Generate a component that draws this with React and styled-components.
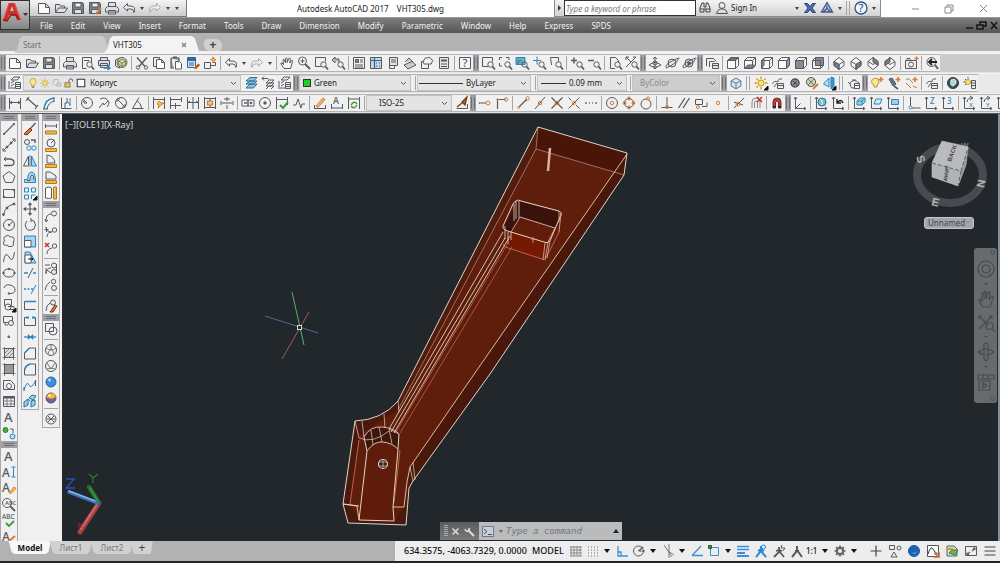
import React from 'react';
import styled, { createGlobalStyle, css } from 'styled-components';

const GlobalStyle = createGlobalStyle`
  * { box-sizing: border-box; }
  html, body, #root { height: 100%; }
  body {
    margin: 0;
    overflow: hidden;
    background: #b2b2b2;
    font: 8px/12px "Noto Sans", "Open Sans", sans-serif;
    color: #222;
  }
  button, input, select { font: inherit; color: inherit; margin: 0; padding: 0; border: 0; background: none; }
`;

/* ---------- glyph library: [path, stroke, fill, width] on a 16 unit grid ---------- */
const K = '#555a62';
const B = '#2a86bd';
const O = '#dc7a32';
const R = '#c8322e';
const G = '#3f9a35';
const N = 'none';
const LB = '#a9d4ea';
const Y = '#f2c84b';

const c = (x, y, r) => `M${x - r} ${y}a${r} ${r} 0 1 0 ${2 * r} 0a${r} ${r} 0 1 0 ${-2 * r} 0`;
const box = (x, y, w, h) => `M${x} ${y}h${w}v${h}h${-w}z`;
const T = (t, x, y, s, fill = K) => ({ t, x, y, s, fill });
const LENS = [[c(10.5, 9.5, 2.7)], ['M12.5 11.5l2.5 3', K, N, 1.8]];
const AXES = [['M3.5 2.5v11h10M2 4l1.5-2L5 4M12 12l2 1.5L12 15']];

const glyphs = {
  fresh: [['M2.5 3.5h7l4 4v6h-11zM9.5 3.5v4h4', K, '#fafafa']],
  open: [['M2.5 12.5v-8h4l1 1.5h4v2M2.5 12.5l3-4.500h9l-3 4.500z', K, '#dde0e4']],
  save: [['M2.5 2.5h10l1 1v10h-11z', K, '#7d838b'], [box(5, 3, 6, 4), K, '#eee'], [box(4.5, 9.5, 7, 4), K, '#dfe3e8']],
  saveAs: [['M2.5 2.5h10l1 1v10h-11z', K, '#7d838b'], [box(5, 3, 6, 4), K, '#eee'], [box(4.5, 9.5, 7, 4), K, '#dfe3e8'], ['M9 14l5-6', O, N, 2]],
  print: [['M4.5 6.500v-4h7v4M3.500 6.500h9l2 2v3.500h-13V8.500zM4.500 10.500h7v3.500h-7z', K, '#dcdfe3']],
  preview: [['M12.500 7V2.500h-9v11h4M5 5.500h5'], ...LENS],
  publish: [['M4.500 5.500v-3h7v3M3 5.500h10.500v5H2.500v-5zM4.500 8.500h7v4h-7z', K, '#dcdfe3'], ['M8 13h5.500M11.500 11l2.500 2-2.500 2', B, N, 1.500]],
  print3d: [['M2.500 5l4-2v10l-4-2z', K, '#e8eaec'], [c(9, 7.500, 5), K, '#dfe6c9'], ['M9 4l3.500 2v3.500L9 11.500 5.500 9.500V6zM5.500 6L9 8l3.500-2M9 8v3.500', '#6d6a3c', '#d9d17a', 0.8]],
  cut: [['M3 2.500l8 9M13 2.500l-8 9', K, N, 1.400], [c(4, 12.5, 1.700)], [c(12, 12.5, 1.700)]],
  copy: [['M2.500 2.500h6v2M2.500 2.500v9h3'], ['M5.500 4.500h5l3 3v6h-8zM10.500 4.500v3h3', K, '#fff']],
  paste: [['M3 3h8v3M3 3v10h3M5 2h4', K, '#a8aab0', 1.200], ['M7.500 6.500h4l2 2v5.500h-6z', K, '#fff']],
  match: [[box(2.5, 2.5, 8, 10), '#35608f', '#d4e2ef'], ['M3 4.500h7', '#2b6ba5', N, 3], ['M4 8h5M4 10h5', '#35608f'], ['M9 13l4-4 2 1-4 4z', O, '#a85c22']],
  block: [['M2.500 7.500h6v6h-6zM8.500 10.500h5v-3h-3M11 2.500v3'], ['M11 2l1 2 2 .5-2 1-.5 2-1-2-2-1 2-.5z', O, Y]],
  undo: [['M6.500 3.500L2.500 7.500l4 3.500V9h3.500q2.500 0 3 3.500q2-6-3-6.500H6.500z', K, '#eceef1']],
  redo: [['M9.500 3.500L13.500 7.500l-4 3.500V9H6q-2.500 0-3 3.500q-2-6 3-6.500h3.500z', '#a9adb3', '#eceef1']],
  hand: [['M5 13.500L2 9q-.5-1.500 1-1l1.500 1.500L4 5q.5-1.500 1.500 0L6.500 8 6.500 3.500q1-1.500 1.700 0V7.500L9.700 3.500q1-1 1.600 0L10.800 8 12.500 5.500q1.500-.5 1 1L11.500 13.500z', K, '#f5f5f5']],
  zoomRt: [[c(6.5, 6, 4)], ['M9 9l5 5', K, N, 1.800], ['M6.500 4v4M4.500 6h4']],
  zoomWin: [['M8 11.500H2.500v-9h10v4'], ...LENS],
  zoomPrev: [['M2 5l3-3v2h4v3M2 5l3 3V6', K, '#b9bcc1'], ...LENS],
  zoomDyn: [['M2.500 5V2.500H5M9 2.500h3V5M2.500 8v3H5'], ...LENS],
  zoomScale: [[box(2, 2.5, 9, 7), B, '#5fb0c9'], ['M4 9V6h3'], ...LENS],
  zoomCtr: [['M6 1.500v8M2 5.500h8', B], ...LENS],
  zoomObj: [['M3.500 10L2.500 2.500h8v4'], ...LENS],
  zoomIn: [['M2 5.500h6M5 2.500v6', K, N, 1.500], ...LENS],
  zoomOut: [['M2 5.500h6', K, N, 1.500], ...LENS],
  zoomAll: [['M8 13.500H3.500v-11h5l3 3v2'], ...LENS],
  zoomExt: [['M2 2l5 5M12 2L7 7 2 12M2 5V2h3M9 2h3'], ...LENS],
  props: [[box(2.5, 2.5, 11, 11)], [box(4.5, 4.5, 3, 3), K, '#888'], ['M9 5h3M9 7h3M4 10h8M4 12h8']],
  design: [[box(2.5, 2.5, 11, 11), K, '#c7d5e5'], ['M6.500 3v10M3 5.500h10M8 8h1M11 8h1M8 11h1M11 11h1', '#35608f', N, 1.200]],
  palette: [[box(4.5, 2.5, 8, 8), K, '#e2e2e2'], ['M4.500 2.500v11h5v-3M6 5h5M6 7h5']],
  sheets: [['M2 10l8-3.500 4 3.500-8 4zM3 7l4-4 4 4', K, '#c9ccd1']],
  markup: [[box(2.5, 6.5, 7, 7)], ['M5 5q1-3 3-2q3-2 4 1q3 1 1 3q0 3-3 2H5q-2-2 0-4z', K, '#f3f3f3']],
  calc: [[box(3.5, 2.5, 9, 11), K, '#e4e7ea'], ['M5 5.500h6', K, N, 2], ['M5 9h6M5 11.500h6', K, N, 1]],
  help: [[box(2.5, 2.5, 11, 11), K, '#f5f5f5'], T('?', 5.5, 12, 11)],
  orbit: [[c(8, 8, 2)], ['M8 2v12M2 10q6-5 12 0q-6 4-12 0zM6 4l2-2 2 2M6 12l2 2 2-2']],
  orbit2: [[c(8, 8, 4), K, '#e5e7ea'], ['M2.500 13Q0 10 9 5.500T14 4.500q0 2-6 5.500t-5.500 3']],
  orbit3: [[c(8, 8, 4), K, '#d8dbdf'], ['M2.500 13Q0 10 9 5.500T14 4.500q0 2-6 5.500t-5.500 3'], ['M7 7l3 1-3 2z', K, K]],
  views: [['M2.500 11V3.500h7l3 3M5.500 12V6.500h5'], [box(8.5, 8.5, 6, 5), K, '#e2e2e2'], ['M9 10.500h5']],
  cubeTop: [['M2.500 5.500h8v8h-8zM2.500 5.500l3-3h8l-3 3M13.500 2.500v8l-3 3', K, '#fafafa'], ['M3 5l2.500-2h7L10 5z', K, '#878c94']],
  cubeBottom: [['M2.500 5.500h8v8h-8zM2.500 5.500l3-3h8l-3 3M13.500 2.500v8l-3 3', K, '#fafafa'], ['M3 13l2.500-3h7L10 13z', K, '#878c94']],
  cubeLeft: [['M2.500 5.500h8v8h-8zM2.500 5.500l3-3h8l-3 3M13.500 2.500v8l-3 3', K, '#fafafa'], ['M3 6l2-3v7l-2 3z', K, '#a4a8ae']],
  cubeRight: [['M2.500 5.500h8v8h-8zM2.500 5.500l3-3h8l-3 3M13.500 2.500v8l-3 3', K, '#fafafa'], ['M11 6l2-3v7l-2 3z', K, '#d6d8dc']],
  cubeFront: [['M2.500 5.500h8v8h-8zM2.500 5.500l3-3h8l-3 3M13.500 2.500v8l-3 3', K, '#fafafa'], [box(2.5, 5.5, 8, 8), K, '#878c94']],
  cubeBack: [[box(5.5, 2.5, 8, 8), K, '#878c94'], ['M2.500 5.500h8v8h-8zM2.500 5.500l3-3M10.500 13.500l3-3']],
  isoSW: [['M8 2.500l5 4v4l-5 4-5-4v-4zM3 6.500l5 3 5-3M8 9.500v5', K, '#fafafa'], ['M3 6.500l5 3v5l-5-4z', K, '#777c84']],
  isoSE: [['M8 2.500l5 4v4l-5 4-5-4v-4zM3 6.500l5 3 5-3M8 9.500v5', K, '#fafafa'], ['M13 6.500l-5 3v5l5-4z', K, '#777c84']],
  isoNE: [['M8 2.500l5 4v4l-5 4-5-4v-4zM3 6.500l5 3 5-3', K, '#fafafa'], ['M8 2.500l5 4v4L8 7z', K, '#777c84']],
  isoNW: [['M8 2.500l5 4v4l-5 4-5-4v-4zM3 6.500l5 3 5-3', K, '#fafafa'], ['M8 2.500l-5 4v4L8 7z', K, '#777c84']],
  camera: [[box(2.5, 5.5, 11, 8)], ['M4 5V3.500h3V5'], [c(8, 9.5, 2.500)], ['M11.500 3.500h4M13.500 1.500v4', O, N, 1.500]],
  prevView: [[c(7.5, 7, 4.500), K, '#eee'], ['M11 10l3 4', K, N, 2], ['M5 7h8M8 4L5 7l3 3', '#222', N, 1.800]],

  layers: [['M4 5l3-3h6l-3 3zM4 8l3-2M4 11l3-2M3 13h5M2 6v8'], [box(8.5, 7.5, 5, 6), K, '#eee'], ['M9 9.500h4M9 11.500h4']],
  bulb: [['M8 2q4 0 4 4q0 2-2 4v2H6v-2Q4 8 4 6q0-4 4-4z', '#b8962c', '#f9e88f'], ['M6.500 13.500h3', K, N, 1.500]],
  sun: [[c(8, 8, 3), '#c99b17', '#fbe37c'], ['M8 1.500v2M8 12.500v2M1.500 8h2M12.500 8h2M3.500 3.500l1.500 1.500M11 11l1.500 1.500M3.500 12.500L5 11M11 5l1.500-1.500', '#c99b17']],
  freeze: [['M3 3.500h7M3 3.500v7M5 11h3M10 5v2', '#a5a9ae'], [box(8, 8, 5, 4), '#a5a9ae', '#ddd']],
  lock: [[box(2.5, 7.5, 7, 6), '#8a7230', '#d9c178'], ['M8 7V5q0-2.500 2.500-2.500T13 5v1', K, N, 1.300]],
  swatch: [[box(3, 3, 10, 10), '#333', '#fff', 1.400]],
  layerCur: [['M3 6l4-3.500h7L10.500 6zM3 9l4-3h7l-3.500 3zM3 13l4-4h7l-3.500 4z', '#2f6f98', '#8fc0dc']],
  layerPrev: [['M6 8l3-3h5l-3 3zM6 11l3-3h5l-3 3zM6 14l3-3h5l-3 3M2 3.500h5q2 0 2 1M4 1.500l-2 2 2 2']],
  world: [['M3 6l5-3 5 3v5l-5 3-5-3zM3 6l5 2 5-2M8 8v6', '#5b8098', '#cfe0ea']],
  light: [[c(8, 8, 3), '#c99b17', '#fbe37c'], ['M8 1.500v2.500M8 12v2.500M1.500 8H4M12 8h2.500M3.500 3.500L5 5M11 5l1.500-1.500M3.500 12.500L5 11', '#d49b1a', N, 1.400], ['M15 11v4h-4z', '#111', '#111']],
  matBrowse: [['M2.500 9Q4 5 8 7q0-4 4-3M4 12l3-4'], [box(7.5, 8.5, 6, 5), K, '#eee'], ['M8 10.500h5']],
  material: [[c(8, 8, 4), '#4a4f56', '#8b8f95', 1.500], ['M6 6l4 4M10 6l-4 4', '#44484e']],
  texture: [[c(7, 7, 4.500), K, '#d9d3b6'], ['M4 4l6 6M10 4l-6 6', K, N, 0.8], ['M9 14l5-5', O, N, 2]],
  section: [['M8 3L2.500 9l5.500 3z', B, '#bfe0f2'], ['M10 2v12l3-2V3z', B, '#3a94c9'], ['M15 11v4h-4z', '#111', '#111']],
  render: [['M4 8q4-5 9 0v5H6q-2-1-2-5zM2 7l2 2'], [box(8.5, 8.5, 5, 5), K, '#eee'], ['M9 10.500h4M6 5h4']],
  bulbNew: [['M6 3q4 0 4 4q0 2-2 3v2H5v-2Q2.500 9 2.500 6.500T6 3z', '#b8962c', '#f9e88f'], ['M12 2v5M9.500 4.500h5', O, N, 1.600]],
  spot: [['M3 4l3-1 4 6-3 2z', K, '#6c7178'], ['M8 11l4 3', K, N, 1.600], ['M12 2v5M9.500 4.500h5', O, N, 1.600]],
  distant: [['M3 4h3l4 4M3 8l5 5M10 11l4 2', '#a88c2a'], ['M12 2v5M9.500 4.500h5', O, N, 1.600]],
  globe: [[c(8, 8, 5.5), '#2d3a42', '#36505e'], ['M6 5q4-2 5 1t-3 5q-3 0-2-6', '#dfe9ed', '#bcd0d8']],
  sunProp: [[c(6, 7, 2.500), '#c99b17', '#fbe37c'], ['M6 2v1.500M1.500 7H3M3 4l1 1M3 10l1-1', K], [box(9.5, 5.5, 4, 8), K, '#eee'], ['M10 8h3M10 10.500h3']],

  dimLin: [['M2.500 3v11M13.500 3v11M3 7.500h10M5 6L3 7.500 5 9M11 6l2 1.500L11 9']],
  dimAlign: [['M3 3l10 9M2 6l3-4M11 14l3-4', K, N, 1.200]],
  dimArc: [['M3 14Q4 4 13 3', B, N, 1.500], ['M6 14Q7 8 13 6M2 14h5M13 2v5']],
  dimOrd: [['M3.500 2.500v11h10M7 13V8h2V3', K], ['M9 6l3 4M12 3v8', B]],
  dimRad: [[c(8, 8, 5.5)], ['M8 8L4 4M8 8h-3V5']],
  dimJog: [['M4 4q6-3 9 3q0 3-2 5M3 13l4-5 1 2 4-4']],
  dimDia: [[c(8, 8, 5.5)], ['M4 4l8 8M4 7V4h3M9 12h3V9']],
  dimAng: [['M13.500 13.500H2.500L9 2.500M7 6q4 2 4.500 7']],
  dimQuick: [['M2.500 2v12M13.500 2v12M3 4.500h10'], ['M8 6l2 2h3l-3 2-3 3 1-3-2-1z', O, Y]],
  dimBase: [['M2.500 2v12M7.500 8v6M13.500 2v5M3 4.500h10M3 10.500h10']],
  dimCont: [['M2.500 2v12M8 2v12M13.500 2v12M3 7.500h10M5 6L3 7.500M11 6l2 1.500']],
  dimSpace: [['M2.500 2v12M13.500 2v12M3 3.500h10M3 12.500h10'], [box(5.500, 6, 5, 4), O, '#f3c58a', 1.200], ['M8 4v2M8 10v2', K]],
  dimBreak: [['M3 8h10M8 2v4M8 10v4M5 4h6M2 6v4M14 6v4']],
  tol: [[box(2, 5, 12, 6), K, '#fff'], ['M8 5v6M4 8h3', K, N, 1.500], [c(11, 8, 1), K, K]],
  center: [[c(8, 8, 5.5)], [c(8, 8, 1.2), K, K]],
  inspect: [['M2.500 2v12M13.500 2v8M3 4.500h10'], ['M6 10l3 3 5-6', G, N, 2]],
  jogged: [['M2 10h3l2-6 3 9 1-4h3']],
  dimEdit: [['M2.500 13.500h11M2.500 10v4M13.500 10v4'], ['M4 11l7-8 2 1.500-7 8z', O, '#e8b97c']],
  dimText: [T('A', 4, 9, 9), ['M2.500 13h11M2.500 9v5M13.500 9v5']],
  dimUpd: [['M2.500 2v12M13.500 2v12M3 4h10'], ['M5 10q3-5 6-1M11 10q-3 5-6 1', G, N, 1.400]],
  dimStyle: [['M2.500 13.500h11V9', K], ['M3 12l5-4M13 2L8 7l3 3z', '#6b3a16', '#b36a2c', 1.200]],

  snTrack: [['M2 8h7M2 8h1'], [c(11, 8, 2), O]],
  snFrom: [['M3.500 14V4.500h8', K, N, 1.200], [c(12, 4.5, 1.700), O], [c(3.5, 4.5, .7), O]],
  snEnd: [['M4 12L12 4', K, N, 1.200], [c(12.5, 3.500, 1.800), O], [c(3.500, 12.500, 1), O]],
  snMid: [['M3 14L13 2', K], [c(8, 8, 1.800), O]],
  snInt: [['M2.500 2.500l11 11M13.500 2.500l-11 11', K, N, 1.200], [c(8, 8, 1.800), O]],
  snApp: [['M2.500 2.500l3 3M10 10l3.500 3.500M13.500 2.500l-11 11', K], [c(8, 8, 1.500), O]],
  snExt: [['M2 8h2M6 8h1M9 8h1M12 8h2', '#777', N, 1.400]],
  snCen: [[c(8, 8, 5.500)], [c(8, 8, 1.800), O]],
  snQuad: [[c(8, 8, 4.500)], [c(8, 3.500, 1.500), O], [c(8, 12.500, 1.500), O], [c(3.500, 8, 1.500), O], [c(12.500, 8, 1.500), O]],
  snTan: [[c(8, 9, 5)], [c(10, 3.500, 1.500), O]],
  snPerp: [['M8 2v10M2.500 12.500h11', K], [c(8, 12, 1.500), O]],
  snPar: [['M2.500 13L9 3M7 13l6.500-10', K, N, 1.300]],
  snIns: [[box(2.5, 4.5, 7, 5)], ['M9 11.500h5v-4'], [c(5, 12, 1.500), O]],
  snNode: [[c(8, 8, 1.700), O]],
  snNear: [['M3 13L13 3M3 7l9 3', K], [c(7, 9, 2), O]],
  snNone: [['M4 13V7q0-4 4-4t4 4v6M6.500 13V7q1.500-2 3 0v6', '#888'], ['M9 2l5 5M14 2L9 7', R, N, 1.500]],
  magnet: [['M4 13V7q0-4 4-4t4 4v6H9.500V7Q8 5 6.500 7v6z', '#7b2522', '#b5413c'], ['M4 12h2.500M9.500 12H12', '#222', N, 2]],

  ucs: [...AXES, ['M3.500 13.500l5-5']],
  ucsWorld: [...AXES, [c(9, 7, 4), '#27708f', '#7dbccd'], ['M7 4q4 3 1 6', '#fff']],
  ucsPrev: [...AXES, ['M7 8q4-5 6 0M7 4v4h4', '#222', N, 1.400]],
  ucsFace: [...AXES, ['M6 6l3-3h5v4l-3 3H6zM6 6h5v4M11 6l3-3', B, '#9fcfe5']],
  ucsObj: [...AXES, ['M6 9l2-5h6l-2 5z', B, '#d5ecf6']],
  ucsView: [...AXES, [box(6.5, 4.5, 7, 5), B, '#9fcfe5']],
  ucsOrg: [['M4.500 2v11h10'], [c(4.5, 12.5, 1.500), B, '#fff']],
  ucsZ: [...AXES, T('Z', 7, 9, 8, B)],
  ucs3: [...AXES, T('3', 7, 9, 8, B)],
  ucsX: [...AXES, ['M6 7q1-5 5-4M9 1l3 2-3 2', K], T('X', 8, 12, 6, B)],
  ucsY: [...AXES, ['M6 7q1-5 5-4M9 1l3 2-3 2', K], T('Y', 8, 12, 6, B)],
  ucsAxis: [...AXES, ['M6 7q1-5 5-4M9 1l3 2-3 2', K]],

  line: [['M3 13L13 3', K, N, 1.100], [c(3, 13, .7), K, K], [c(13, 3, .7), K, K]],
  xline: [['M2.500 13.500l11-11'], [c(6, 10, 1), K, K], [c(10, 6, 1), K, K], ['M2 11v3h3M11 2h3v3']],
  pline: [['M3 12.500h6q4 0 4-3t-4-3.500H4', K, N, 1.300], ['M5 4L3 6l2 2']],
  polygon: [['M8 2.500l6 4.500-2.300 6.500H4.300L2 7z']],
  rect: [[box(2.5, 4.5, 11, 8)], [c(3, 12, .8), K, K], [c(13, 5, .8), K, K]],
  arc: [['M2.500 14Q4 5 13 3'], [c(2.500, 13.500, 1), K, K], [c(6, 7, 1), K, K], [c(13, 3, 1), K, K]],
  circle: [[c(8, 8, 5.5)], ['M8 8l4-3.500'], [c(8, 8, .8), K, K]],
  cloud: [['M5 3q3-2 4 1q4-1 4 2.500T12 9q2 4-2 4.500T6 12q-4 1-3.500-2T4 7.500Q1 5 5 3z']],
  spline: [['M2.500 13Q4 1 8 8t5.500-5']],
  ellipse: [['M2.500 8q0-4 5.500-4t5.500 4-5.500 4-5.500-4z'], [c(8, 4, .8), K, K], [c(2.500, 8, .8), K, K], [c(13.500, 8, .8), K, K]],
  ellArc: [['M3 7q1-4 6-3t5 5-6 3.500'], [c(8, 12.500, .8), K, K]],
  insert: [[box(3.5, 2.5, 7, 6)], [c(7, 10, 3), K, '#eee'], ['M7 9.500h6v3H8'], ['M15 11v4h-4z', '#111', '#111']],
  makeBlock: [[box(2.5, 3.5, 9, 6)], [c(10, 10, 2.500), K, '#eee'], ['M4 9v3h3']],
  point: [[box(7, 7, 1.500, 1.500)]],
  hatch: [[box(3.5, 3.5, 9, 9), K, '#ddd'], ['M1.500 3.500h13M1.500 12.500h13M3.500 2v13M12.500 2v13M4 8l4-4M4 12l8-8M8 12l4-4', K, N, .7]],
  gradient: [[box(3.5, 3.5, 9, 9), K, '#999'], ['M1.500 3.500h13M1.500 12.500h13M3.500 2v13M12.500 2v13', K, N, .7]],
  region: [['M2.500 3.500h7l4 4v5h-11z'], [c(8, 9, 2.500), K, '#fff']],
  table: [[box(2.5, 3.5, 11, 10)], ['M2.500 4.500h11', K, N, 2], ['M2.500 8h11M2.500 11h11M6 4v9M10 4v9', K, N, .7]],
  text: [T('A', 3, 13, 13)],
  addSel: [[c(4.500, 5, 2.500), '#2c7c2c', '#55a84a'], [c(11.500, 11.500, 2.500), B, '#b5dff5'], ['M9 4h3v4']],
  textEdit: [T('A', 1, 13, 12), ['M10.500 3h4M10.500 13h4M12.500 3v10', B]],
  textPen: [T('A', 1, 12, 12), ['M8 13l5-6 2 1.500-5 5z', O, Y]],
  findText: [T('ABC', 4, 9, 6), [c(6, 7, 4.500)], ['M9 10l5 5', K, N, 1.800]],
  spell: [T('ABC', 1, 7, 6.500), ['M5 11l3 3 5-5', G, N, 1.800]],
  textStyle: [T('A', 1, 13, 12), ['M8 13l6-5', O, N, 2]],

  erase: [['M13.500 2L8 8', K, N, 1.300], ['M8 7l2 2-5 5-3-1z', '#7c3516', '#d9783b']],
  copyObj: [[c(5, 5, 2.500)], [c(7, 11, 2.200), B], [c(12, 11, 2.200), B], ['M9 3h4v3', K, N, 1.500]],
  mirror: [['M6.500 3v10h-5z', K], ['M9.500 3v10h5z', B, LB], ['M8 2v12', K, N, .8]],
  offset: [['M2.500 13.500v-3h3Q6 3 9.500 3t4 7.500v3z', B, LB], ['M5 11.500h3Q8 6 10 6t2 5.500', K]],
  array: [[box(2.5, 3, 4, 4), B], [box(9.500, 3, 4, 4), B], [box(2.5, 10, 4, 4), B], ['M9.500 14v-4h4', B], ['M15 11v4h-4z', '#111', '#111']],
  move: [['M8 2v4M8 10v4M2 8h4M10 8h4M6.500 4L8 2l1.500 2M6.500 12L8 14l1.500-2M4 6.500L2 8l2 1.500M12 6.500L14 8l-2 1.500', K, N, 1.200], [box(7, 7, 2, 2)]],
  rotate: [['M5 4Q2 7 4 11t8 1q3-4 0-8L9 3'], ['M9 1v4', K]],
  scale: [[box(2.5, 3, 11, 11), B, LB], [box(2.5, 7.500, 6.500, 6.500), K, '#fff']],
  stretch: [['M3 3h5l6 11H3z', B, LB], [box(3, 6, 6, 8), K, '#fff'], ['M6 10h5M9.500 8.500L11 10l-1.500 1.500', '#111']],
  trim: [['M6 13l5-10'], ['M2 8h4M11 8h3', B, N, 1.300]],
  extend: [['M2 8h2M5.500 8h2M9 8h2', B, N, 1.300], ['M9 13l5-9', B]],
  breakPt: [['M2.500 4.500h10M2.500 4.500v8h11', K], ['M3 4.500h11', B, N, 1.500]],
  breakObj: [['M5 4.500H2.500v8h11v-8H11', K], ['M4 4.500h3M10 4.500h3', B, N, 2]],
  join: [['M2 8h12', B, N, 1.300], ['M6 5.500v5L9 8zM11 5.500v5L8 8z', B, B, .5]],
  chamfer: [['M2.500 14V8l5-5h6v11z'], ['M2.500 8l5-5', B, N, 1.500]],
  fillet: [['M2.500 14V9q1-5 6-6h5v11z'], ['M2.500 9q1-5 6-6', B, N, 1.500]],
  blend: [['M2 13q3-10 5-5t7-5', B], ['M2 10v4M13.500 3v6', K]],
  explode: [['M2 9l4-3v6l-4 2zM7 5l3-3 4 1-3 4zM9 8l4-1v5l-4 2zM6 6l2 2', '#1c74a6', '#9fd0e8']],

  dist: [['M2.500 3v4M13.500 3v4M3 5h10'], [box(2.5, 10, 11, 3), '#b17a1d', '#f0b94d']],
  radius: [[c(8, 6, 4)], ['M8 6l3-3'], [box(2.5, 11.500, 11, 3), '#b17a1d', '#f0b94d']],
  angle: [['M4 10V2q7 1 8 8z'], [box(2.5, 11.500, 11, 3), '#b17a1d', '#f0b94d']],
  area: [['M3 10V3h4l6 4v3z'], [box(2.5, 11.500, 11, 3), '#b17a1d', '#f0b94d']],
  volume: [['M2.500 3q3-2 6 0v10q-3 1-6 0z', K, '#fff'], [box(10.5, 2, 3, 12), '#b17a1d', '#f0b94d']],
  leader: [['M3 13q0-7 5-7'], [c(11, 5.500, 2.500)], ['M2 11l1 3 2-2']],
  leaderAdd: [['M4 13q0-5 5-5M3 3q0 5 6 5M1.500 5.500h4M3.500 3v5', K], [c(11.500, 6, 2.200)]],
  leaderDel: [['M4 14q0-5 5-6', K], [c(11.500, 6, 2.200)], ['M2 3l4 4M6 3L2 7', R, N, 1.500]],
  leaderAlign: [['M2 4h5M3 13q0-6 5-6M3 7v5M4 9l4 3'], [c(11, 4.500, 2.500)], [c(11, 11, 2.500)], ['M13.500 3v10']],
  leaderCol: [['M2 13q1-6 5-8'], [c(10.500, 4.500, 2.200)], [c(11, 11, 2.500)]],
  leaderSty: [['M3 13q0-6 4-8'], [c(10, 4.500, 2.500)], ['M7 14l5-7 2 1-4 6z', '#7c3516', '#d9783b']],
  union: [[box(2.5, 2.5, 8, 8)], [c(10, 10, 4)]],
  wire: [[c(8, 8, 5.500)], ['M3 6q5 4 10 0M5 12q3-10 6 0M8 3v4', K, N, .8]],
  hidden: [[c(8, 8, 5.500)], ['M4 5l4 6 4-6M4 11l4-1 4 1', K, N, .8]],
  shadeB: [[c(8, 8, 5), '#2366a8', '#3c8fdc'], [c(6.500, 6, 1.200), '#9dcaf5', '#b8dbfa']],
  shadeG: [[c(8, 8, 5), '#5a4c78', '#775da8'], ['M3.500 7q2-5 8-3l1 3q-4 3-9 0z', '#d6a42b', '#f3bd37'], [c(6.500, 5.500, .8), '#fff', '#fff']],
  manageVS: [[c(8, 8, 5)], ['M4.500 4.500l7 7M11.500 4.500l-7 7M4 8h8']],

  grid: [['M3 3v10M6 3v10M9 3v10M12 3v10M2 4h12M2 7h12M2 10h12M2 13h12', '#777', N, .8]],
  dots: [['M3 4h11M3 7h11M3 10h11M3 13h11', '#777', N, 1, '1 2']],
  ortho: [['M4 3v10h10M4 9h3v4', '#3a8fdd', N, 1.300]],
  polar: [[c(7.5, 8, 5)], ['M7.500 8H14M7.500 8L12 4', K, N, 1.200]],
  iso: [['M4 2l8 12M14 12L8 8M9 1v14', '#777']],
  track: [['M3 12.500h11M3 12.500L12 3', '#3a8fdd', N, 1.300]],
  osnap: [[box(4.5, 4.5, 8, 8), '#3a8fdd'], [box(2.5, 2.5, 3, 3), '#275f2c', '#3f8a45']],
  weight: [['M2 3.500h12M2 6.500h12', '#3a8fdd', N, 1.500], ['M2 10h8M2 13h12', '#3a8fdd', N, 2.200]],
  annoVis: [['M8 3v5L3 14M8 8l5 6M5 8l3-2 3 2', '#2f86db', N, 2], [c(10.500, 4, 2), '#2f86db']],
  annoAuto: [['M8 4v5L3 14M8 8l5 6M5 8l3-1 3 1', K, N, 1.800], ['M11 2l-1 3h4l-2 3', K]],
  annoScale: [['M8 3v5L3 14M8 7l5 7M6 8h4', K, N, 2]],
  gear: [[c(8, 8, 3.200), '#62666b', N, 2.300], ['M8 2.500v2M8 11.500v2M2.500 8h2M11.500 8h2M4 4l1.500 1.500M10.500 10.500L12 12M4 12l1.500-1.500M10.500 5.500L12 4', '#62666b', N, 1.700]],
  plus: [['M8 2.500v11M2.500 8h11', '#444', N, 1.200]],
  units: [[box(2.5, 2.5, 5, 4)], [c(12, 5, 2)], ['M7 9l3 5H4z']],
  isolate: [[c(8, 8, 5.500), '#1b5cab', '#1d62b5'], ['M6.500 10q3 1 4-1', '#6fa2da']],
  hw: [[box(2.5, 2.5, 11, 11), '#555', '#fff'], ['M3 11q3-9 5-5t5 5', '#333'], ['M9 10l5 4M14 9v5H9', '#c66a3a', N, 1.600]],
  layersGrn: [['M3 3h7l3 3v7H3z', '#566', '#d9dcc9'], ['M5 10l3-3h6l-3 5z', '#3b7c3b', '#6fb55c'], ['M2 6h7', '#c9a227', N, 2]],
  clean: [[box(2.5, 3.500, 11, 9)], ['M9 8l3-3M10 5h2v2M7 9l-3 2.500M4 9.500v2h2', K, N, 1.100]],
  burger: [['M2.500 4h11M2.500 8h11M2.500 12h11', '#444', N, 1.200]],

  binoc: [['M3 12V8l2-5h2v4h2V3h2l2 5v4H9V9H7v3z', '#444', '#ddd'], ['M3 9h4M9 9h4', '#444']],
  user: [[c(8, 5.5, 3), '#4a5562'], ['M2.500 13.500q1-4 4-4.500h3q3 .5 4 4.500z', '#4a5562']],
  exchange: [['M2.500 3.500h3l2.500 3 2.500-3h3L10 8l3.500 4.500h-3L8 9.500l-2.500 3h-3L6 8z', '#28477e', '#4a6fae']],
  a360: [['M8 2.500l5.500 9.500h-11zM8 5.500v3l-3.500 3M8 8.500l3.500 3', '#3c5686', '#c5d1e6', 1.300]],
  helpRound: [[c(8, 8, 6), '#2c548d', '#f4f8fd', 1.300], T('?', 5.5, 12, 11, '#2c548d')],
};

const Svg = styled.svg`
  display: block;
  flex: none;
  overflow: hidden;
`;

function Glyph({ name, size = 16 }) {
  return (
    <Svg width={size} height={size} viewBox="0 0 16 16" aria-hidden="true">
      {glyphs[name].map((g, i) =>
        g.t ? (
          <text key={i} x={g.x} y={g.y} fontSize={g.s} fill={g.fill} fontFamily="Noto Sans, sans-serif" fontWeight="500">{g.t}</text>
        ) : (
          <path key={i} d={g[0]} stroke={g[1] || K} fill={g[2] || N} strokeWidth={g[3] || 1} strokeDasharray={g[4]} />
        ),
      )}
    </Svg>
  );
}

/* ---------- shared parts ---------- */
const ToolButton = styled.button`
  display: flex;
  flex: none;
  align-items: center;
  justify-content: center;
  width: ${(p) => p.$w || 17}px;
  height: 16px;
`;

const Arrow = styled.button`
  flex: none;
  display: flex;
  align-items: center;
  justify-content: center;
  width: ${(p) => p.$w || 9}px;
  height: 16px;
  color: ${(p) => p.$tone || '#444'};
  &::before {
    content: '';
    border: ${(p) => p.$s || 2}px solid transparent;
    border-top: ${(p) => (p.$s || 2) + 1}px solid currentColor;
    border-bottom: 0;
  }
`;

const Separator = styled.span`
  flex: none;
  ${(p) => (p.$across
    ? css`height: 1px; margin: 2px 1px; align-self: stretch;`
    : css`width: 1px; margin: 1px 1px 1px 2px; align-self: stretch;`)}
  background: #a5a5a5;
`;

const DoubleSeparator = styled.span`
  flex: none;
  align-self: stretch;
  width: 4px;
  margin: 1px 2px;
  border: solid #a5a5a5;
  border-width: 0 1px;
`;

const Grip = styled.span`
  flex: none;
  align-self: stretch;
  ${(p) => (p.$across
    ? css`
      height: 7px;
      border: solid #9fa0a4;
      border-width: 2px 3px;
      background: repeating-linear-gradient(#707176 0 1px, #9fa0a4 1px 2px);
    `
    : css`
      width: 6px;
      border: solid #9fa0a4;
      border-width: 2px 1px;
      background: repeating-linear-gradient(90deg, #707176 0 1px, #9fa0a4 1px 3px);
    `)}
`;

function Tools({ items, across }) {
  return items.split(' ').map((it, i) => {
    if (it === '|') return <Separator key={i} $across={across} />;
    if (it === '||') return <DoubleSeparator key={i} />;
    if (it === '#') return <Grip key={i} $across={across} />;
    if (it === 'v') return <Arrow key={i} aria-label="More" />;
    return <ToolButton key={i} aria-label={it}><Glyph name={it} /></ToolButton>;
  });
}

/* ---------- window frame ---------- */
const Window = styled.div`
  display: flex;
  flex-direction: column;
  height: 100%;
  min-height: 480px;
  border-bottom: 2px solid #22262b;
`;

const Header = styled.header`
  flex: none;
  display: grid;
  grid-template-columns: 30px minmax(0, 1fr);
  grid-template-rows: 17px 16px;
  background: linear-gradient(#fff 17px, #6d6d6d 17px, #5b5b5b);
`;

const AppMenu = styled.button`
  grid-row: 1 / 3;
  height: 30px;
  border: 1px solid #333;
  background: linear-gradient(#d0d0d0, #858585);
`;

const TitleBar = styled.div`
  display: flex;
  align-items: stretch;
  min-width: 0;
`;

const QuickAccess = styled.div`
  flex: none;
  display: flex;
  align-items: center;
  width: 157px;
  padding-left: 5px;
  background: linear-gradient(#f4f4f4, #cdcdcd);
  border: solid #777;
  border-width: 0 1px 1px 0;
`;

const Caption = styled.h1`
  flex: 1;
  min-width: 0;
  margin: 0;
  overflow: hidden;
  text-align: center;
  white-space: pre;
  font-size: 8px;
  font-weight: 400;
  line-height: 17px;
`;

const InfoCenter = styled.div`
  flex: none;
  display: flex;
  align-items: center;
  width: 327px;
  background: linear-gradient(#f4f4f4, #d2d2d2);
  border: solid #8a8a8a;
  border-width: 0 1px 1px 1px;
`;

const PlayButton = styled.button`
  flex: none;
  width: 9px;
  height: 16px;
  &::before {
    content: '';
    display: block;
    margin-left: 3px;
    width: 0;
    border: 3px solid transparent;
    border-left: 3px solid #333;
    border-right: 0;
  }
`;

const Search = styled.input`
  width: 132px;
  height: 16px;
  padding: 0 1px;
  background: #fff;
  border: 1px solid #333;
  font-style: italic;
  &::placeholder { color: #777; opacity: 1; }
`;

const SignIn = styled.button`
  display: flex;
  align-items: center;
  justify-content: space-between;
  width: 71px;
  height: 16px;
  padding-left: 1px;
`;

const WindowControls = styled.div`
  flex: none;
  display: flex;
  width: 119px;
  padding-left: 17px;
  background: #fff;
`;

const WindowButton = styled.button`
  flex: 1;
  display: flex;
  align-items: center;
  justify-content: center;
`;

const MenuBar = styled.nav`
  display: flex;
  align-items: center;
  gap: 18px;
  padding: 0 1px 0 10px;
  color: #f2f2f2;
  background: linear-gradient(#7d7d7d, #555);
  border-top: 1px solid #999;
  overflow: hidden;
`;

const MenuLink = styled.a`
  color: inherit;
  text-decoration: none;
  line-height: 15px;
`;

const DocControls = styled.div`
  display: flex;
  margin-left: auto;
  color: #111;
`;

const FileTabs = styled.div`
  flex: none;
  display: flex;
  align-items: flex-end;
  height: 20px;
  padding-left: 14px;
  background: linear-gradient(#b2b2b2 18px, #f0f0f0 18px);
`;

const FileTab = styled.button`
  position: relative;
  display: flex;
  align-items: center;
  justify-content: space-between;
  width: 96px;
  height: 17px;
  margin-right: ${(p) => (p.$on ? 4 : -6)}px;
  padding: 0 13px 0 9px;
  color: ${(p) => (p.$on ? '#222' : '#6d6d6d')};
  background: ${(p) => (p.$on ? '#f4f4f4' : '#cbcbcb')};
  clip-path: polygon(0 100%, 3px 80%, 6px 15%, 9px 0, 88px 0, 91px 15%, 95px 90%, 100% 100%);
`;

const NewTab = styled.button`
  width: 18px;
  height: 12px;
  margin-bottom: 2px;
  border-radius: 4px 6px 4px 6px;
  background: #d0d0d0;
  font-size: 12px;
  line-height: 12px;
  font-weight: 700;
  color: #444;
`;

const ToolRow = styled.div`
  flex: none;
  display: flex;
  align-items: center;
  height: 20px;
  overflow: hidden;
  background: ${(p) => p.$bg || '#e9e9e9'};
  border-top: 1px solid #f4f4f4;
  border-bottom: 1px solid #e3e3e3;
`;

const Strip = styled.div`
  flex: none;
  display: flex;
  align-items: center;
  height: 18px;
  background: #f0f0f0;
  border: solid #b3b3b3;
  border-width: 1px 0;
`;

const Combo = styled.label`
  flex: none;
  display: flex;
  align-items: center;
  width: ${(p) => p.$w}px;
  height: 16px;
  margin-right: ${(p) => p.$gap || 1}px;
  padding: 0 3px 0 ${(p) => p.$pad || 3}px;
  gap: 3px;
  border: 1px solid #c3c3c3;
  background: ${(p) => (p.$off ? '#cdcdcd' : '#e4e4e4')};
  color: ${(p) => (p.$off ? '#8c8c8c' : '#222')};
`;

const Choice = styled.select`
  flex: 1;
  min-width: 0;
  appearance: none;
  outline: 0;
  opacity: 1;
  line-height: 12px;
`;

const LayerState = styled.span`
  display: flex;
`;

const Swatch = styled.span`
  width: 8px;
  height: 8px;
  border: 1px solid #333;
  background: #1fd11f;
`;

const Stroke = styled.span`
  width: ${(p) => p.$w}px;
  height: 1px;
  background: #333;
`;

const Chevron = () => (
  <Svg width="7" height="5" viewBox="0 0 7 5" aria-hidden="true"><path d="M1 1l2.500 2.500L6 1" fill="none" stroke="#555" /></Svg>
);

function Picker({ w, gap, pad, off, label, value, children }) {
  return (
    <Combo $w={w} $gap={gap} $pad={pad} $off={off}>
      {children}
      <Choice aria-label={label} disabled={off} defaultValue={value}><option>{value}</option></Choice>
      <Chevron />
    </Combo>
  );
}

/* ---------- work area ---------- */
const Work = styled.div`
  flex: 1;
  min-height: 0;
  display: flex;
  border-top: 1px solid #555a60;
`;

const Palettes = styled.aside`
  flex: none;
  display: flex;
  align-items: flex-start;
  gap: 3px;
  width: 62px;
  background: #f0f0f0;
  overflow: hidden;
`;

const Column = styled.div`
  flex: none;
  display: flex;
  flex-direction: column;
  width: 18px;
  align-items: center;
  background: #f0f0f0;
  border: solid #a9a9a9;
  border-width: 0 1px 1px;
`;

const Canvas = styled.main`
  position: relative;
  flex: 1;
  min-width: 0;
  overflow: hidden;
  background: #22272c;
  border-right: 2px solid #8b8e91;
`;

const Scene = styled.svg`
  display: block;
  width: 936px;
  height: 427px;
`;

const ViewLabel = styled.div`
  position: absolute;
  top: 5px;
  left: 3px;
  font-size: 9px;
  color: #d5d8da;
`;

const ViewCube = styled.svg`
  position: absolute;
  top: 21px;
  right: 4px;
`;

const UcsMenu = styled.button`
  position: absolute;
  top: 103px;
  right: 24px;
  display: flex;
  align-items: center;
  justify-content: space-between;
  width: 50px;
  height: 12px;
  padding: 0 3px;
  line-height: 10px;
  border-radius: 3px;
  border: 1px solid #c3c6cd;
  background: #a3a6af;
  color: #3f434b;
`;

const NavBar = styled.div`
  position: absolute;
  top: 134px;
  right: 1px;
  display: flex;
  flex-direction: column;
  align-items: center;
  justify-content: space-between;
  width: 23px;
  height: 155px;
  padding: 2px 0;
  border-radius: 3px;
  background: #686b6e;
`;

const NavButton = styled.button`
  display: block;
  width: 20px;
  height: 20px;
  color: #464a4e;
`;

const NavDot = styled.span`
  border: 2px solid transparent;
  border-top-color: #464a4e;
  border-bottom: 0;
`;

const NavKnob = styled.button`
  align-self: flex-end;
  width: 5px;
  height: 5px;
  margin-right: 2px;
  border: 1px solid #4c5054;
  border-radius: 50%;
`;

const CommandLine = styled.form`
  position: absolute;
  left: 378px;
  bottom: 1px;
  display: flex;
  align-items: center;
  width: 182px;
  height: 18px;
  background: #b9bbbd;
  color: #333;
`;

const CommandTools = styled.div`
  display: flex;
  align-items: center;
  justify-content: space-around;
  width: 39px;
  height: 18px;
  padding: 0 2px;
  background: linear-gradient(#5a5c5e, #77797b);
`;

const Dots = styled.span`
  width: 4px;
  height: 12px;
  background: repeating-linear-gradient(#aaa 0 1px, transparent 1px 2px);
`;

const CommandInput = styled.input`
  flex: 1;
  min-width: 0;
  padding-left: 1px;
  outline: 0;
  font: italic 9px/12px "DejaVu Sans Mono", "Liberation Mono", monospace;
  &::placeholder { color: #74777a; opacity: 1; }
`;

/* ---------- footer ---------- */
const Footer = styled.footer`
  flex: none;
  display: flex;
  height: 20px;
  background: #ededed;
`;

const LayoutTabs = styled.div`
  display: flex;
  align-items: flex-start;
  width: 395px;
  padding-left: 8px;
  background: #b2b2b2;
`;

const LayoutTab = styled.button`
  width: 44px;
  height: 13px;
  margin-right: -3px;
  background: ${(p) => (p.$on ? '#f7f7f7' : '#d1d1d1')};
  color: ${(p) => (p.$on ? '#111' : '#777')};
  font-weight: ${(p) => (p.$on ? 700 : 400)};
  clip-path: polygon(0 0, 100% 0, 97% 15%, 92% 85%, 86% 100%, 14% 100%, 8% 85%, 3% 15%);
`;

const AddLayout = styled(LayoutTab)`
  width: 22px;
  font-size: 12px;
  line-height: 12px;
  color: #444;
`;

const Status = styled.div`
  flex: 1;
  min-width: 0;
  display: flex;
  align-items: center;
  padding: 0 1px 0 9px;
  color: #111;
  font-weight: 500;
`;

const Coordinates = styled.output`
  flex: none;
  width: 128px;
  font-size: 9px;
  white-space: nowrap;
`;

const StatusText = styled.button`
  flex: none;
  width: ${(p) => p.$w}px;
  text-align: left;
  font-size: ${(p) => p.$size || 8}px;
  font-weight: 500;
`;

const StatusEnd = styled.div`
  display: flex;
  margin-left: auto;
`;

function StatusTools({ items, w }) {
  return items.split(' ').map((it, i) =>
    it === 'v'
      ? <Arrow key={i} $w={12} $s={3} $tone="#111" aria-label="Options" />
      : <ToolButton key={i} $w={w} aria-label={it}><Glyph name={it} /></ToolButton>,
  );
}

const menus = ['File', 'Edit', 'View', 'Insert', 'Format', 'Tools', 'Draw', 'Dimension', 'Modify', 'Parametric', 'Window', 'Help', 'Express', 'SPDS'];

function BracketModel() {
  return (
    <g strokeLinejoin="round" fill="none">
      <path fill="#49180e" d="M538 127L627 153 624 175 490 374 413 481 409 488 406 525 348 523 343 504 355 421Q382 420 398 401z" />
      <path fill="#5f1d0c" d="M536 149L624 175 626 155 477 370 410 467 404 507 394 521 359 520 350 504 360 435 380 421 399 410z" />
      <path fill="#53200f" opacity=".6" d="M538 127L536 149 399 411 398 401z" />
      <path fill="#491509" d="M538 127L627 153 624 175 536 149z" />
      <path fill="#4a170c" d="M627 153L624 175 413 481 410 467z" />
      <path fill="#38120b" d="M518 201L561 213 555 228 520 217 511 232 503 228z" />
      <path fill="#621c0a" d="M520 217L555 228 548 243 511 232z" />
      <path fill="#741a03" d="M511 232L548 243 545 260 505 247z" />
      <path fill="#3f140b" d="M364 437Q370 426 382 427T399 434L398 449Q392 441 382 442T367 451z" />
      <path fill="#601c0b" d="M367 451Q374 441 383 442T398 449L394 521 359 520z" />
      <g stroke="#c0644a" strokeWidth="1">
        <path d="M536 149L624 175M538 127L536 149M536 149L398 410" stroke="#bd8173" strokeWidth=".8" />
        <path d="M359 440L350 504M400 450L394 503M505 247L545 260L559 232M503 244L505 247" />
        <path d="M508 243L396 432M512 247L400 433" strokeWidth=".8" />
      </g>
      <g stroke="#e0d5c3" strokeWidth="1">
        <path d="M398 401L538 127 627 153 624 175 490 374 413 481 409 488 406 525 348 523 343 504 355 421Q382 420 398 401" />
        <path d="M627 154L477 370 410 467 407 482 404 507H393M343 504L357 506 359 520" stroke="#dfbd94" />
        <path d="M516 201Q518 199 521 201L559 211Q563 213 560 217L550 241Q547 244 544 242L511 232Q502 230 503 226L513 204Q514 202 516 201z" />
        <path d="M516 201V219M519 201V218M514 204V221M520 217L555 228M505 226V239M508 232V244M511 232V240" strokeWidth=".8" />
        <path d="M559 212V222M561 213L559 232M548 243L545 259M550 241L547 258M545 243L543 260M520 217L511 232M555 228L548 242" strokeWidth=".8" stroke="#e4b9a5" />
        <path d="M503 232L389 429M505 238L391 432M510 236L394 433" strokeWidth=".9" />
        <path d="M359 520L394 521M364 437L367 451 359 520M399 434L398 449 393 507 394 521" />
        <path d="M364 437Q370 426 382 427T399 434M367 451Q374 441 383 442T398 449" stroke="#d2b9ad" />
        <path d="M355 421L359 438Q373 444 389 431M362 421L364 437M384 414L385 428M398 401L399 412M379 427L382 442M371 430L373 445M389 429L392 444M389 429L399 434M413 462L415 480M410 467L413 481" strokeWidth=".7" />
        <path d="M343 504L359 506" />
      </g>
      <path d="M550 148L548 171" stroke="#deb1a7" strokeWidth="2.500" />
      <path d="M533 237V243M531 239H535" stroke="#d29c91" strokeWidth=".8" />
      <circle cx="383" cy="464" r="4.500" stroke="#d8d0cb" strokeWidth="1.200" fill="#391b16" />
      <path d="M379 462H387M379 466H387M383 460V468" stroke="#d8d0cb" strokeWidth=".7" />
    </g>
  );
}

function Drawing() {
  return (
    <Scene viewBox="62 114 936 427" role="img" aria-label="3D part in X-Ray style">
      <BracketModel />
      <path d="M292 292L304 345" stroke="#58b070" />
      <path d="M265 316L318 333" stroke="#6260a8" />
      <path d="M309 312L282 359" stroke="#9c5c50" />
      <rect x="297.500" y="325.500" width="4" height="4" fill="#22272c" stroke="#d8dcd8" />
      <g strokeLinecap="round">
        <path d="M99 503L80 532" stroke="#a83f40" strokeWidth="5" />
        <path d="M98 503L81 529" stroke="#d06566" strokeWidth="2" />
        <path d="M99 503L89 487" stroke="#256b2b" strokeWidth="4.500" />
        <path d="M98 501L90 488" stroke="#419145" strokeWidth="1.500" />
        <path d="M98 503L69 492" stroke="#3b71b8" strokeWidth="3.500" />
        <path d="M95 501L69 491" stroke="#85b2e6" strokeWidth="1.500" />
      </g>
      <path d="M66 479H74L66 488H75" stroke="#2b4fb5" fill="none" strokeWidth="1.300" />
      <path d="M89 474L93 478L98 474M93 478V483" stroke="#2c8432" fill="none" strokeWidth="1.100" />
      <path d="M78 523L84 529M84 523L78 527" stroke="#b22c32" />
    </Scene>
  );
}

function Compass() {
  return (
    <ViewCube width="84" height="76" viewBox="910 135 84 76" aria-label="View cube" role="img">
      <ellipse cx="950" cy="175" rx="33" ry="28" fill="none" stroke="#474b50" strokeWidth="8" />
      <text x="961" y="148" fontSize="8" fontWeight="700" fill="#777b80" fontFamily="Liberation Sans, sans-serif">W</text>
      <path d="M942 141L968 147 961 171 932 163z" fill="#b9babc" stroke="#d2d3d4" strokeWidth=".5" />
      <path d="M932 163L961 171 958 186 932 177z" fill="#b1b2b5" stroke="#d2d3d4" strokeWidth=".5" />
      <path d="M968 147L961 171 958 186 966 165z" fill="#98999c" stroke="#d2d3d4" strokeWidth=".5" />
      <path d="M932 163L961 171 968 148M946 167V181M961 171L958 186" fill="none" stroke="#44474b" strokeDasharray="4 2" strokeWidth=".8" />
      <g fontFamily="Liberation Sans, sans-serif" fontWeight="700" fill="#45484c">
        <text transform="translate(951 162) rotate(-70)" fontSize="6">BACK</text>
        <text transform="translate(947 181) rotate(-80)" fontSize="5">RIGHT</text>
        <g fill="#b4b6b8" fontSize="11">
          <text transform="translate(916 157) rotate(70)">S</text>
          <text transform="translate(978 179) rotate(100)">N</text>
          <text transform="translate(931 205) rotate(14)">E</text>
        </g>
      </g>
    </ViewCube>
  );
}

const navIcons = [
  ['Wheel', 'M10 2a8 8 0 1 0 .1 0M10 6a4 4 0 1 0 .1 0M14 15v3'],
  ['Pan', 'M7 18L3 12Q2 9 5 11L6 12V5Q7 3 8 5V10 3Q9 1 10 3V10L12 3Q13 2 14 4L13 11 16 7Q18 7 17 9L14 18z'],
  ['Zoom', 'M3 3L12 12M16 3L3 16M3 6V3H6M13 3H16V6M10 13a3.500 3.500 0 1 0 7 0a3.500 3.500 0 1 0-7 0M16 16L19 19'],
  ['Orbit', 'M8 2L10 1 12 2V17L10 19 8 17zM2 10Q10 4 18 10Q10 16 2 10zM4 8V12H8'],
  ['Motion', 'M2 3H18V7H2zM7 3V7M12 3V7M3 9H14V18H3zM7 11L11 13.500 7 16z'],
];

export default function App() {
  return (
    <>
      <GlobalStyle />
      <Window>
        <Header>
          <AppMenu aria-label="Application menu">
            <Svg width="28" height="28" viewBox="0 0 28 28" aria-hidden="true">
              <path d="M2 19L8 2h6l6 17h-4l-2-5H8l-2 6zM9 10h4l-2-5z" fill="#cf2f28" fillRule="evenodd" />
              <path d="M2 19l4 1 4-6h5l3 5" fill="none" stroke="#8e1916" strokeWidth="1.300" />
              <path d="M13 2l6 16M8 2L3 17" stroke="#e9574f" strokeWidth="1" />
              <path d="M22 12h5l-2.500 3z" fill="#333" />
            </Svg>
          </AppMenu>
          <TitleBar>
            <QuickAccess>
              <Tools items="fresh open save saveAs print undo v" />
              <Tools items="redo v v" />
            </QuickAccess>
            <Caption>{'Autodesk AutoCAD 2017    VHT305.dwg'}</Caption>
            <InfoCenter>
              <PlayButton aria-label="Collapse search" />
              <Search aria-label="Search" placeholder="Type a keyword or phrase" />
              <ToolButton aria-label="Find"><Glyph name="binoc" /></ToolButton>
              <ToolButton aria-label="Account"><Glyph name="user" /></ToolButton>
              <SignIn>Sign In<Arrow as="span" /></SignIn>
              <ToolButton aria-label="Exchange"><Glyph name="exchange" /></ToolButton>
              <ToolButton aria-label="A360"><Glyph name="a360" /></ToolButton>
              <Arrow aria-label="A360 options" />
              <DoubleSeparator />
              <ToolButton aria-label="Help"><Glyph name="helpRound" /></ToolButton>
              <Arrow aria-label="Help options" />
            </InfoCenter>
            <WindowControls>
              {['M2 6h7', 'M1 4h6v6h-6zM3 4V2h6v6h-2', 'M2 2l7 7M9 2l-7 7'].map((d, i) => (
                <WindowButton key={d} aria-label={['Minimize', 'Restore', 'Close'][i]}>
                  <Svg width="11" height="11"><path d={d} fill="none" stroke="#888" /></Svg>
                </WindowButton>
              ))}
            </WindowControls>
          </TitleBar>
          <MenuBar>
            {menus.map((m) => <MenuLink key={m} href="#menu">{m}</MenuLink>)}
            <DocControls>
              {['M2 8h7', 'M1 5h6v4h-6zM4 5V2h6v4h-3', 'M3 2l6 7M9 2l-6 7'].map((d, i) => (
                <ToolButton key={d} $w={12} aria-label={['Minimize drawing', 'Restore drawing', 'Close drawing'][i]}>
                  <Svg width="11" height="11"><path d={d} fill="none" stroke="#161616" strokeWidth="1.500" /></Svg>
                </ToolButton>
              ))}
            </DocControls>
          </MenuBar>
        </Header>

        <FileTabs>
          <FileTab>Start</FileTab>
          <FileTab $on>VHT305<Svg width="6" height="6"><path d="M1 1l4 4M5 1l-4 4" stroke="#888" strokeWidth="1.500" /></Svg></FileTab>
          <NewTab aria-label="New drawing">+</NewTab>
        </FileTabs>

        <ToolRow $bg="#cbcbcb">
          <Strip>
            <Tools items="# fresh open save | print preview publish print3d | cut copy paste match block | undo v redo v | hand zoomRt zoomWin zoomPrev | props design palette sheets markup calc | help" />
            <Tools items="# zoomWin zoomDyn zoomScale zoomCtr zoomObj | zoomIn zoomOut | zoomAll zoomExt # orbit orbit2 orbit3" />
            <Tools items="# views | cubeTop cubeBottom cubeLeft cubeRight cubeFront cubeBack | isoSW isoSE isoNE isoNW | camera | prevView" />
          </Strip>
        </ToolRow>
        <ToolRow>
          <Strip>
            <Tools items="# layers" />
            <Picker w={218} label="Layer" value="Корпус">
              <LayerState>
                {['bulb', 'sun', 'freeze', 'lock', 'swatch'].map((g) => <Glyph key={g} name={g} size={12} />)}
              </LayerState>
            </Picker>
            <Tools items="layerCur layerPrev layers #" />
            <Picker w={112} gap={2} label="Color" value="Green"><Swatch /></Picker>
            <Separator />
            <Picker w={114} gap={2} pad={1} label="Linetype" value="ByLayer"><Stroke $w={44} /></Picker>
            <Separator />
            <Picker w={90} label="Lineweight" value="0.09 mm"><Stroke $w={25} /></Picker>
            <Separator />
            <Picker w={88} pad={7} off label="Plot style" value="ByColor" />
            <Tools items="# world || light matBrowse material texture section || render" />
            <Tools items="# bulbNew spot distant | matBrowse | globe sunProp" />
          </Strip>
        </ToolRow>
        <ToolRow>
          <Strip>
            <Tools items="# dimLin dimAlign dimArc dimOrd | dimRad dimJog dimDia dimAng | dimQuick dimBase dimCont dimSpace dimBreak | tol center inspect jogged | dimEdit dimText dimUpd |" />
            <Picker w={86} pad={12} label="Dimension style" value="ISO-25" />
            <Tools items="dimStyle # snTrack snFrom | snEnd snMid snInt snApp snExt | snCen snQuad snTan | snPerp snPar snIns snNode | snNear snNone | magnet" />
            <Tools items="# ucs | ucsWorld ucsPrev | ucsFace ucsObj ucsView | ucsOrg ucsZ ucs3 | ucsX ucsY ucsAxis" />
          </Strip>
        </ToolRow>

        <Work>
          <Palettes>
            <Column>
              <Tools across items="# line xline pline polygon rect arc circle cloud spline ellipse ellArc insert makeBlock point hatch gradient region table text addSel # text textEdit textPen findText spell textStyle" />
            </Column>
            <Column>
              <Tools across items="# erase copyObj mirror offset array move rotate scale stretch trim extend breakPt breakObj join chamfer fillet blend explode" />
            </Column>
            <Column>
              <Tools across items="# dist radius angle area volume # leader leaderAdd leaderDel | leaderAlign leaderCol | leaderSty # union | wire hidden shadeB shadeG | manageVS" />
            </Column>
          </Palettes>
          <Canvas>
            <Drawing />
            <ViewLabel>[−][OLE1][X-Ray]</ViewLabel>
            <Compass />
            <UcsMenu>Unnamed<Svg width="6" height="4"><path d="M1 0l2 2 2-2" fill="none" stroke="#858993" /></Svg></UcsMenu>
            <NavBar>
              <NavKnob aria-label="Close navigation bar" />
              {navIcons.map(([name, d], i) => (
                <React.Fragment key={name}>
                  <NavButton aria-label={name}>
                    <Svg width="20" height="20"><path d={d} fill="none" stroke="currentColor" strokeWidth="1.200" /></Svg>
                  </NavButton>
                  {(i === 0 || i === 2 || i === 3) && <NavDot />}
                </React.Fragment>
              ))}
              <NavKnob aria-label="Customize navigation bar" />
            </NavBar>
            <CommandLine>
              <CommandTools>
                <Dots />
                <Svg width="9" height="9"><path d="M1.500 1.500l6 6M7.500 1.500l-6 6" stroke="#ddd" strokeWidth="1.500" /></Svg>
                <Svg width="11" height="11"><path d="M4 4l6 6" stroke="#ddd" strokeWidth="2" /><path d="M1 3q1 3 3 2t1-3" fill="none" stroke="#ddd" strokeWidth="1.500" /></Svg>
              </CommandTools>
              <ToolButton type="button" aria-label="Recent commands">
                <Svg width="12" height="11"><rect x=".5" y=".5" width="11" height="10" fill="#c9ced8" stroke="#717b90" /><path d="M2 3l3 2.500L2 8M6 8.500h4" fill="none" stroke="#3e5275" /></Svg>
              </ToolButton>
              <Arrow type="button" $tone="#666" aria-label="Command history" />
              <CommandInput aria-label="Command" placeholder="Type a command" />
              <ToolButton type="button" $w={12} aria-label="Expand"><Svg width="7" height="4"><path d="M0 4h6L3 0z" fill="#222" /></Svg></ToolButton>
            </CommandLine>
          </Canvas>
        </Work>

        <Footer>
          <LayoutTabs>
            <LayoutTab $on>Model</LayoutTab>
            <LayoutTab>Лист1</LayoutTab>
            <LayoutTab>Лист2</LayoutTab>
            <AddLayout aria-label="New layout">+</AddLayout>
          </LayoutTabs>
          <Status>
            <Coordinates>634.3575, -4063.7329, 0.0000</Coordinates>
            <StatusText $w={35} $size={9}>MODEL</StatusText>
            <StatusTools items="grid dots v" />
            <StatusTools items="ortho polar v iso v" />
            <StatusTools items="track osnap v" />
            <StatusTools w={18} items="weight annoVis annoAuto annoScale" />
            <StatusText $w={13}>1:1</StatusText>
            <StatusTools items="v gear v" />
            <StatusEnd>
              <StatusTools w={19} items="plus units isolate hw layersGrn clean burger" />
            </StatusEnd>
          </Status>
        </Footer>
      </Window>
    </>
  );
}
